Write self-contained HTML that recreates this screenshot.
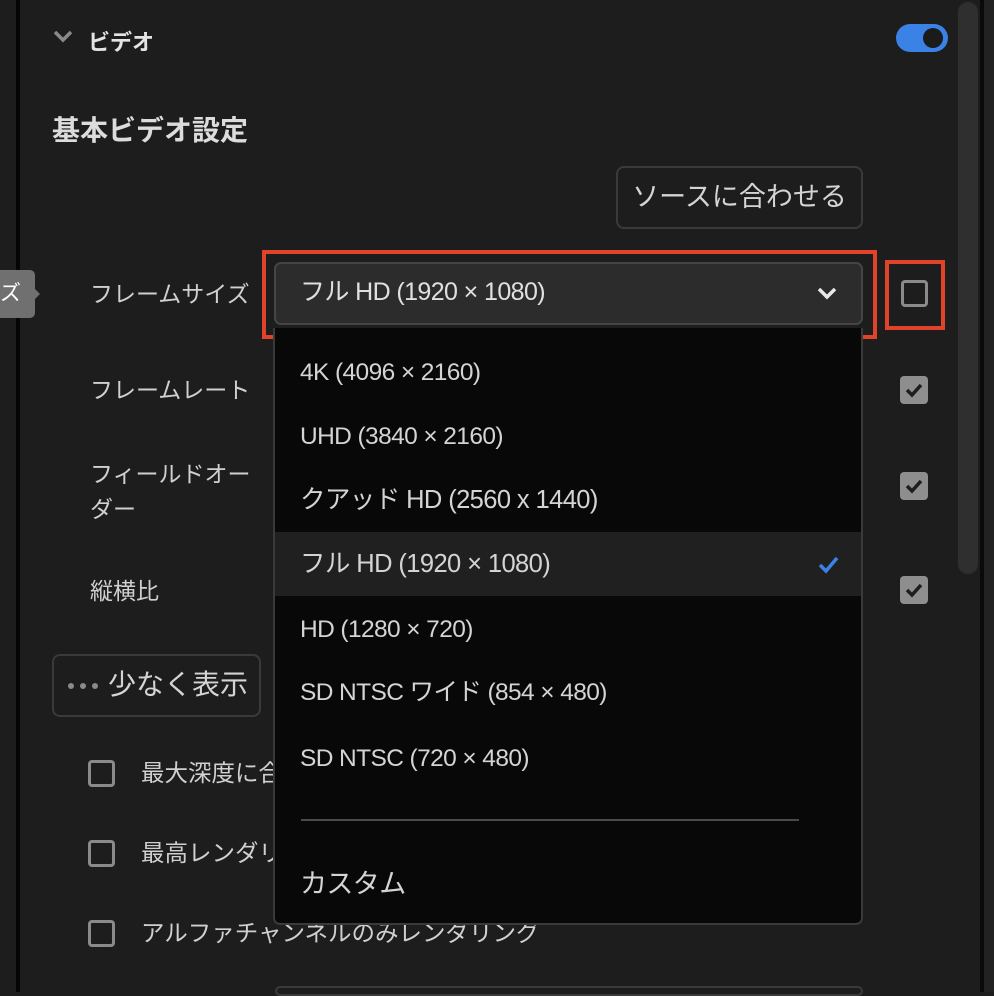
<!DOCTYPE html>
<html><head><meta charset="utf-8"><style>
*{margin:0;padding:0;box-sizing:border-box}
body{width:994px;height:992px;background:#1d1d1d;position:relative;overflow:hidden;font-family:"Liberation Sans","Noto Sans CJK JP",sans-serif;color:#d8d8d8}
.a{position:absolute;white-space:nowrap}
.lbl{font-size:23px;color:#d0d0d0;line-height:1}
.item{position:absolute;left:25px;font-size:24.5px;letter-spacing:-0.6px;color:#d4d4d4;line-height:1}
.cb{position:absolute;width:27px;height:27px;border:3px solid #8a8a8a;border-radius:4px}
.cbc{position:absolute;width:28px;height:28px;background:#8e8e8e;border-radius:4px}
</style></head><body>
<div class="a" style="left:16px;top:0;width:4px;height:992px;background:#050505"></div>
<div class="a" style="left:980px;top:0;width:4px;height:992px;background:#0a0a0a"></div>
<div class="a" style="left:984px;top:0;width:10px;height:992px;background:#222"></div>
<div class="a" style="left:958px;top:2px;width:20px;height:572px;background:#2f2f2f;border-radius:10px"></div>

<svg class="a" style="left:52px;top:28px" width="22" height="16"><path d="M3 4 L11 12 L19 4" stroke="#8a8a8a" stroke-width="3.5" fill="none"/></svg>
<div class="a" style="left:88px;top:25px;font-size:22px;font-weight:bold;color:#e4e4e4">ビデオ</div>
<div class="a" style="left:896px;top:24px;width:52px;height:28px;background:#3b82e6;border-radius:14px"></div>
<div class="a" style="left:923px;top:28px;width:20px;height:20px;background:#1b1b1b;border-radius:50%"></div>

<div class="a" style="left:52px;top:109px;font-size:28px;font-weight:bold;color:#dcdcdc">基本ビデオ設定</div>

<div class="a" style="left:616px;top:166px;width:247px;height:63px;border:2px solid #3a3a3a;border-radius:8px;font-size:27px;color:#d4d4d4;text-align:center;line-height:59px">ソースに合わせる</div>

<div class="a" style="left:0;top:270px;width:35px;height:48px;background:#707070;border-radius:0 5px 5px 0;font-size:21px;color:#fff;line-height:48px;text-align:right;padding-right:16px;overflow:visible">ズ</div>
<div class="a" style="left:33px;top:287px;width:0;height:0;border-top:7px solid transparent;border-bottom:7px solid transparent;border-left:7px solid #707070"></div>

<div class="a lbl" style="left:90px;top:283px">フレームサイズ</div>
<div class="a lbl" style="left:90px;top:379px">フレームレート</div>
<div class="a lbl" style="left:90px;top:457px;line-height:35px">フィールドオー<br>ダー</div>
<div class="a lbl" style="left:90px;top:580px">縦横比</div>

<div class="a" style="left:262px;top:250px;width:615px;height:89px;border:4px solid #e0432a"></div>
<div class="a" style="left:274px;top:262px;width:589px;height:63px;background:#2c2c2c;border:2px solid #454545;border-radius:7px"></div>
<div class="a" style="left:300px;top:280px;font-size:25px;letter-spacing:-0.6px;color:#e0e0e0;line-height:1">フル HD (1920 × 1080)</div>
<svg class="a" style="left:816px;top:285px" width="22" height="16"><path d="M3 4 L11 12 L19 4" stroke="#e8e8e8" stroke-width="3.5" fill="none"/></svg>

<div class="a" style="left:885px;top:260px;width:60px;height:70px;border:4px solid #e0432a"></div>
<div class="cb" style="left:901px;top:280px"></div>

<div class="cbc" style="left:900px;top:376px"><svg width="28" height="28"><path d="M7 14 L12 19 L21 9" stroke="#1d1d1d" stroke-width="3.5" fill="none"/></svg></div>
<div class="cbc" style="left:900px;top:472px"><svg width="28" height="28"><path d="M7 14 L12 19 L21 9" stroke="#1d1d1d" stroke-width="3.5" fill="none"/></svg></div>
<div class="cbc" style="left:900px;top:576px"><svg width="28" height="28"><path d="M7 14 L12 19 L21 9" stroke="#1d1d1d" stroke-width="3.5" fill="none"/></svg></div>

<div class="a" style="left:52px;top:654px;width:209px;height:63px;border:2px solid #3a3a3a;border-radius:8px"></div>
<div class="a" style="left:68px;top:683px;width:6px;height:6px;border-radius:50%;background:#8a8a8a;box-shadow:12px 0 #8a8a8a,24px 0 #8a8a8a"></div>
<div class="a" style="left:108px;top:671px;font-size:28px;color:#d4d4d4;line-height:1">少なく表示</div>

<div class="cb" style="left:88px;top:760px"></div>
<div class="a lbl" style="left:141px;top:762px;font-size:23.5px">最大深度に合わせる</div>
<div class="cb" style="left:88px;top:840px"></div>
<div class="a lbl" style="left:141px;top:842px;font-size:23.5px">最高レンダリング品質</div>
<div class="cb" style="left:88px;top:920px"></div>
<div class="a lbl" style="left:141px;top:922px;font-size:23.5px">アルファチャンネルのみレンダリング</div>

<div class="a" style="left:273px;top:328px;width:590px;height:597px;background:#080808;border:2px solid #3a3a3a;border-top:none;border-radius:0 0 7px 7px;overflow:hidden">
 <div class="item" style="top:33px">4K (4096 × 2160)</div>
 <div class="item" style="top:97px">UHD (3840 × 2160)</div>
 <div class="item" style="top:160px;font-size:25.5px">クアッド HD (2560 x 1440)</div>
 <div style="position:absolute;left:0;top:204px;width:590px;height:64px;background:#202020"></div>
 <div class="item" style="top:224px;font-size:25.5px">フル HD (1920 × 1080)</div>
 <svg style="position:absolute;left:542px;top:226px" width="24" height="22"><path d="M3 11 L9 17 L20 4" stroke="#3b82e6" stroke-width="3.5" fill="none"/></svg>
 <div class="item" style="top:290px">HD (1280 × 720)</div>
 <div class="item" style="top:353px">SD NTSC ワイド (854 × 480)</div>
 <div class="item" style="top:419px">SD NTSC (720 × 480)</div>
 <div style="position:absolute;left:26px;top:491px;width:498px;height:2px;background:#4a4a4a"></div>
 <div class="item" style="top:543px;font-size:27px">カスタム</div>
</div>
<div class="a" style="left:275px;top:986px;width:588px;height:10px;border:2px solid #3a3a3a;border-radius:7px"></div>
</body></html>
